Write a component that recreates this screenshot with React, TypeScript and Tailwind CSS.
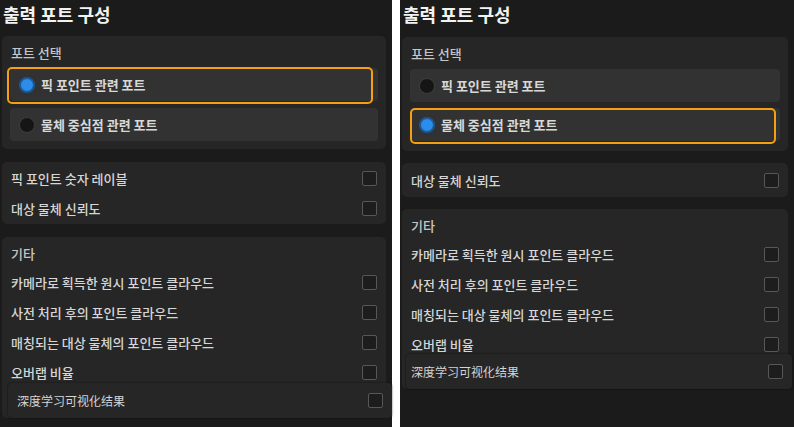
import React from "react";

const FONT = "font-['Noto_Sans_CJK_KR','Noto_Sans',sans-serif]";

function Radio({ selected }: { selected: boolean }) {
  return selected ? (
    <span className="w-[16px] h-[16px] shrink-0 rounded-full border-2 border-[#1b5996] bg-[#2b8de9]" />
  ) : (
    <span className="w-[16px] h-[16px] shrink-0 rounded-full border border-[#3d3d3d] bg-[#151515]" />
  );
}

function Checkbox() {
  return <span className="w-[15px] h-[15px] shrink-0 rounded-[2px] border border-[#575757] bg-[#1d1d1d]" />;
}

function Option({
  label,
  selected,
  ring,
  h,
}: {
  label: string;
  selected: boolean;
  ring?: string;
  h: string;
}) {
  return (
    <div className={`relative flex items-center ${h} rounded-[4px] bg-[#323232] pl-[9px] gap-[6px]`}>
      <Radio selected={selected} />
      <span className="text-[13px] font-bold text-[#d8d8d8] leading-none">{label}</span>
      {ring && <span className={`absolute ${ring} rounded-[5px] border-2 border-[#f5a011]`} />}
    </div>
  );
}

function Row({ label }: { label: string }) {
  return (
    <div className="flex items-center justify-between h-[30px] px-[9px]">
      <span className="text-[13px] font-medium text-[#d6d6d6] leading-none">{label}</span>
      <Checkbox />
    </div>
  );
}

function Overlay({ cls }: { cls: string }) {
  return (
    <div
      className={`relative z-10 flex items-center justify-between h-[35px] rounded-[4px] bg-[#262626] shadow-[0_0_2px_rgba(0,0,0,0.7)] ${cls}`}
    >
      <span className="text-[12px] text-[#d4d4d4] leading-none">深度学习可视化结果</span>
      <Checkbox />
    </div>
  );
}

const others = [
  "카메라로 획득한 원시 포인트 클라우드",
  "사전 처리 후의 포인트 클라우드",
  "매칭되는 대상 물체의 포인트 클라우드",
  "오버랩 비율",
];

function Label({ text, h }: { text: string; h: string }) {
  return (
    <div className={`${h} flex items-center px-[9px] text-[13px] font-medium text-[#c6c6c6] leading-none`}>
      {text}
    </div>
  );
}

function LeftPanel() {
  return (
    <div className="w-[392px] h-[427px] shrink-0 bg-[#1b1b1b] pl-[2px] pr-[6px] flex flex-col">
      <div className="h-[27px] flex items-center pl-px text-[18px] font-bold text-[#f2f2f2] leading-none">
        출력 포트 구성
      </div>
      <div className="mt-[9px] rounded-[5px] bg-[#262626] pt-[8px] pb-[8px]">
        <Label text="포트 선택" h="h-[16px]" />
        <div className="mt-[8px] flex flex-col gap-[7px] px-[8px]">
          <Option
            label="픽 포인트 관련 포트"
            selected
            h="h-[33px]"
            ring="-left-[3px] -top-[1px] right-[5px] -bottom-[3px]"
          />
          <Option label="물체 중심점 관련 포트" selected={false} h="h-[33px]" />
        </div>
      </div>
      <div className="mt-[13px] rounded-[5px] bg-[#262626] py-px">
        <Row label="픽 포인트 숫자 레이블" />
        <Row label="대상 물체 신뢰도" />
      </div>
      <div className="mt-[13px] rounded-[5px] bg-[#262626] pt-[2px] flex flex-col">
        <Label text="기타" h="h-[28px]" />
        {others.map((o) => (
          <Row key={o} label={o} />
        ))}
        <Overlay cls="-mt-[4px] ml-[6px] -mr-[6px] pl-[9px] pr-[9px]" />
      </div>
    </div>
  );
}

function RightPanel() {
  return (
    <div className="w-[394px] h-[427px] shrink-0 bg-[#1b1b1b] pl-[2px] pr-[6px] flex flex-col">
      <div className="h-[27px] flex items-center pl-px text-[18px] font-bold text-[#f2f2f2] leading-none">
        출력 포트 구성
      </div>
      <div className="mt-[10px] rounded-[5px] bg-[#262626] pt-[8px] pb-[10px]">
        <Label text="포트 선택" h="h-[16px]" />
        <div className="mt-[8px] flex flex-col gap-[6px] px-[8px]">
          <Option label="픽 포인트 관련 포트" selected={false} h="h-[33px]" />
          <Option
            label="물체 중심점 관련 포트"
            selected
            h="h-[33px]"
            ring="left-0 top-0 right-[4px] -bottom-[3px]"
          />
        </div>
      </div>
      <div className="mt-[12px] rounded-[5px] bg-[#262626] py-[2px]">
        <Row label="대상 물체 신뢰도" />
      </div>
      <div className="mt-[12px] rounded-[5px] bg-[#262626] pt-[2px] flex flex-col">
        <Label text="기타" h="h-[28px]" />
        {others.map((o) => (
          <Row key={o} label={o} />
        ))}
        <Overlay cls="-mt-[5px] ml-[4px] -mr-[4px] pl-[5px] pr-[9px]" />
      </div>
    </div>
  );
}

export default function App() {
  return (
    <div className={`w-[794px] h-[427px] bg-white flex gap-[8px] overflow-hidden ${FONT}`}>
      <LeftPanel />
      <RightPanel />
    </div>
  );
}
